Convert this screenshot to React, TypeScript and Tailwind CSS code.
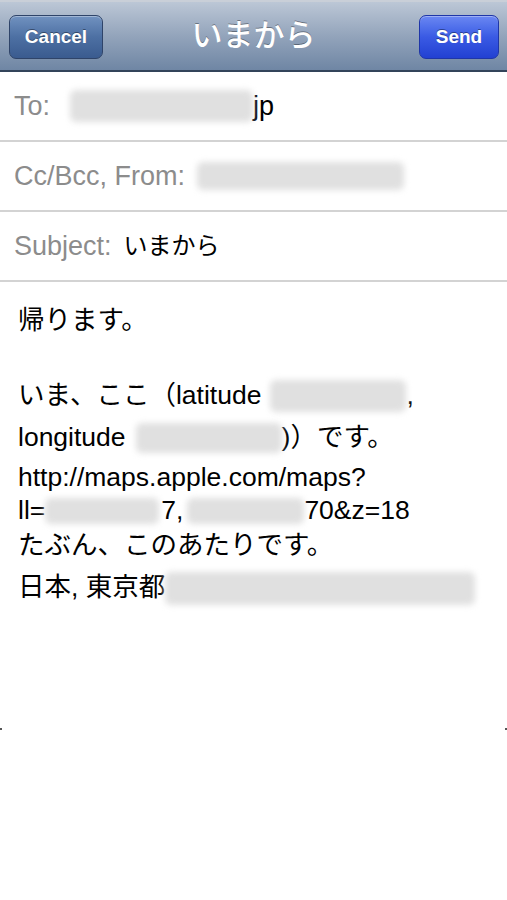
import React from "react";

const font = "font-['Liberation_Sans','Noto_Sans_CJK_JP',sans-serif]";

function Blur({ w, h = 30, className = "" }: { w: number; h?: number; className?: string }) {
  return (
    <span
      className={`inline-block align-middle rounded-md bg-[#e0e0e0] blur-[3px] ${className}`}
      style={{ width: w, height: h }}
    />
  );
}

function Field({ label, children }: { label: string; children?: React.ReactNode }) {
  return (
    <div className="flex h-[70px] items-center border-b-2 border-[#d3d3d3] pl-[14px] text-[27px]">
      <span className="text-[#8c8c8c]">{label}</span>
      {children}
    </div>
  );
}

export default function App() {
  return (
    <div className={`w-[507px] h-[900px] bg-white overflow-hidden ${font}`}>
      {/* Nav bar */}
      <div className="relative flex h-[72px] items-center justify-between border-t-2 border-[#c9cfd8] border-b-2 border-b-[#33445a] bg-gradient-to-b from-[#bcc7d6] via-[#93a4bb] to-[#6f86a4] px-[9px]">
        <button className="mt-[2px] flex h-[44px] w-[94px] items-center justify-center rounded-[7px] border border-[#2f4469] bg-gradient-to-b from-[#7192c0] via-[#4d70a3] to-[#3a5b8f] text-[19px] font-bold text-white shadow-[inset_0_1px_0_rgba(255,255,255,0.35)] [text-shadow:0_-1px_0_rgba(0,0,0,0.4)]">
          Cancel
        </button>
        <span className="absolute left-1/2 -translate-x-1/2 text-[31px] font-medium text-white [text-shadow:0_-1px_0_rgba(0,0,0,0.35)]">
          いまから
        </span>
        <button className="mt-[2px] mr-[-1px] flex h-[44px] w-[80px] items-center justify-center rounded-[7px] border border-[#1f36a8] bg-gradient-to-b from-[#6b87f2] via-[#3a5ae4] to-[#2240d2] text-[19px] font-bold text-white shadow-[inset_0_1px_0_rgba(255,255,255,0.35)] [text-shadow:0_-1px_0_rgba(0,0,0,0.4)]">
          Send
        </button>
      </div>

      {/* Header fields */}
      <Field label="To:">
        <Blur w={183} h={32} className="ml-[20px]" />
        <span className="text-black">jp</span>
      </Field>
      <Field label="Cc/Bcc, From:">
        <Blur w={207} h={28} className="ml-[12px]" />
      </Field>
      <Field label="Subject:">
        <span className="ml-[12px] text-[24px] text-black">いまから</span>
      </Field>

      {/* Body */}
      <div className="px-[18px] pt-[19px] text-[26.5px] text-black">
        <div className="h-[38px] leading-[38px]">帰ります。</div>
        <div className="h-[37px]" />
        <div className="flex h-[40px] items-center whitespace-nowrap">
          <span>いま、ここ（latitude</span>
          <Blur w={136} h={32} className="ml-[9px]" />
          <span>,</span>
        </div>
        <div className="flex h-[44px] items-center whitespace-nowrap">
          <span>longitude</span>
          <Blur w={146} h={30} className="ml-[10px]" />
          <span>)）です。</span>
        </div>
        <div className="flex h-[36px] items-center whitespace-nowrap">http://maps.apple.com/maps?</div>
        <div className="flex h-[30px] items-center whitespace-nowrap">
          <span>ll=</span>
          <Blur w={114} h={26} />
          <span className="ml-[2px]">7,</span>
          <Blur w={117} h={26} className="ml-[4px]" />
          <span>70&amp;z=18</span>
        </div>
        <div className="flex h-[40px] items-center whitespace-nowrap">たぶん、このあたりです。</div>
        <div className="flex h-[44px] items-center whitespace-nowrap">
          <span>日本, 東京都</span>
          <Blur w={310} h={33} />
        </div>
      </div>

      {/* edge marks */}
      <div className="mt-[118px] flex justify-between">
        <span className="h-[2px] w-[2px] bg-[#555]" />
        <span className="h-[2px] w-[2px] bg-[#555]" />
      </div>
    </div>
  );
}
